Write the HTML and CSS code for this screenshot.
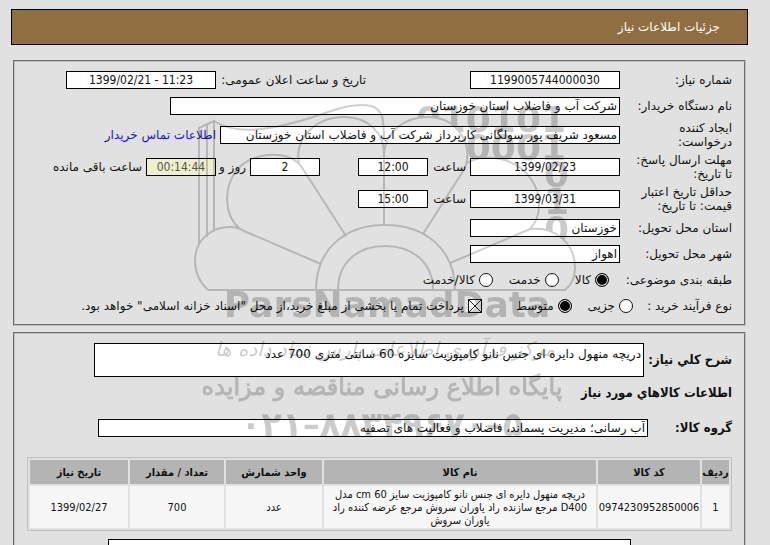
FILE: index.html
```html
<!DOCTYPE html>
<html lang="fa" dir="rtl">
<head>
    <meta charset="UTF-8">
    <meta name="viewport" content="width=device-width, initial-scale=1.0">
    <title>جزئیات اطلاعات نیاز</title>
    <link rel="stylesheet" href="styles.css">
</head>
<body>
    <header class="title-bar">
        <h1>جزئیات اطلاعات نیاز</h1>
    </header>

    <!-- Request details -->
    <section class="panel details">
        <div class="row">
            <label class="caption" for="needNo">شماره نیاز:</label>
            <input class="box center" id="needNo" dir="ltr" value="1199005744000030" readonly>
            <label class="announce" for="announceDate">تاریخ و ساعت اعلان عمومی:</label>
            <input class="box center" id="announceDate" dir="ltr" value="1399/02/21 - 11:23" readonly>
        </div>
        <div class="row">
            <label class="caption" for="buyer">نام دستگاه خریدار:</label>
            <input class="box wide" id="buyer" value="شرکت آب و فاضلاب استان خوزستان" readonly>
        </div>
        <div class="row tall">
            <label class="caption" for="creator">ایجاد کننده درخواست:</label>
            <input class="box creator" id="creator" value="مسعود شریف پور سولگانی کارپرداز شرکت آب و فاضلاب استان خوزستان" readonly>
            <a href="#contact">اطلاعات تماس خریدار</a>
        </div>
        <div class="row tall">
            <label class="caption" for="replyDate">مهلت ارسال پاسخ: تا تاریخ:</label>
            <input class="box center" id="replyDate" dir="ltr" value="1399/02/23" readonly>
            <label class="hour" for="replyTime">ساعت</label>
            <input class="box center small" id="replyTime" dir="ltr" value="12:00" readonly>
            <input class="box center small days" id="daysLeft" dir="ltr" value="2" readonly>
            <label class="day" for="daysLeft">روز و</label>
            <input class="box center small timer" id="timeLeft" dir="ltr" value="00:14:44" readonly>
            <label for="timeLeft">ساعت باقی مانده</label>
        </div>
        <div class="row tall">
            <label class="caption" for="validDate">حداقل تاریخ اعتبار قیمت: تا تاریخ:</label>
            <input class="box center" id="validDate" dir="ltr" value="1399/03/31" readonly>
            <label class="hour" for="validTime">ساعت</label>
            <input class="box center small" id="validTime" dir="ltr" value="15:00" readonly>
        </div>
        <div class="row">
            <label class="caption" for="province">استان محل تحویل:</label>
            <input class="box" id="province" value="خوزستان" readonly>
        </div>
        <div class="row">
            <label class="caption" for="city">شهر محل تحویل:</label>
            <input class="box" id="city" value="اهواز" readonly>
        </div>
        <div class="row">
            <span class="caption subject">طبقه بندی موضوعی:</span>
            <div class="options">
                <label><input type="radio" name="subject" checked>کالا</label>
                <label><input type="radio" name="subject">خدمت</label>
                <label><input type="radio" name="subject">کالا/خدمت</label>
            </div>
        </div>
        <div class="row">
            <span class="caption process">نوع فرآیند خرید :</span>
            <div class="options">
                <label><input type="radio" name="process">جزیی</label>
                <label><input type="radio" name="process" checked>متوسط</label>
                <label class="treasury"><input type="checkbox" checked>پرداخت تمام یا بخشی از مبلغ خرید،از محل "اسناد خزانه اسلامی" خواهد بود.</label>
            </div>
        </div>
    </section>

    <!-- Requested goods -->
    <section class="panel goods">
        <div class="goods-row">
            <label for="summary">شرح کلي نیاز:</label>
            <textarea class="box summary" id="summary" readonly>دریچه منهول دایره ای جنس نانو کامپوزیت سایزه 60 سانتی متری 700 عدد</textarea>
        </div>
        <h2>اطلاعات کالاهاي مورد نیاز</h2>
        <div class="goods-row">
            <label class="group" for="group">گروه کالا:</label>
            <input class="box group-box" id="group" value="آب رسانی؛ مدیریت پسماند، فاضلاب و فعالیت های تصفیه" readonly>
        </div>
        <table>
            <colgroup>
                <col class="col-row">
                <col class="col-code">
                <col>
                <col class="col-unit">
                <col class="col-count">
                <col class="col-date">
            </colgroup>
            <thead>
                <tr>
                    <th>ردیف</th>
                    <th>کد کالا</th>
                    <th>نام کالا</th>
                    <th>واحد شمارش</th>
                    <th>تعداد / مقدار</th>
                    <th>تاریخ نیاز</th>
                </tr>
            </thead>
            <tbody>
                <tr>
                    <td>1</td>
                    <td>0974230952850006</td>
                    <td>دریچه منهول دایره ای جنس نانو کامپوزیت سایز 60 cm مدل D400 مرجع سازنده راد یاوران سروش مرجع عرضه کننده راد یاوران سروش</td>
                    <td>عدد</td>
                    <td>700</td>
                    <td>1399/02/27</td>
                </tr>
            </tbody>
        </table>
        <textarea class="box notes" aria-label="توضیحات" readonly></textarea>
    </section>

    <!-- Watermark -->
    <svg class="watermark" width="400" height="350" viewBox="190 95 400 350" direction="ltr" aria-hidden="true">
        <!-- petals cover the digits behind them -->
        <mask id="petals" maskUnits="userSpaceOnUse" x="190" y="95" width="400" height="350">
            <rect x="190" y="95" width="400" height="350" fill="#fff"/>
            <path d="M384 153C386 132 404 117 428 117C455 117 474 142 465 168L423 234L384 225Z"/>
            <path d="M467 163C488 151 518 160 531 179C541 193 543 215 530 229L450 263Z"/>
            <path d="M565 290Q575 282 575 268C575 244 556 226 530 229L450 263Z"/>
        </mask>
        <g class="lines">
            <path d="M199 245V128L214 121V231M207 237V124"/>
            <path d="M214 121C236 136 272 129 300 121C326 114 350 101 371 106C383 109 384 120 384 140"/>
            <path d="M208 290H565Q575 282 575 268C575 244 556 226 530 229L450 263"/>
            <path d="M208 290Q195 278 195 261C195 240 211 227 230 227Q238 227 244 231L321 264"/>
            <path d="M240 229C224 216 224 190 234 174C247 152 287 148 301 166L346 236"/>
            <path d="M299 164C294 138 316 117 344 117C368 117 384 133 384 153V225"/>
            <path d="M384 153C386 132 404 117 428 117C455 117 474 142 465 168L423 234"/>
            <path d="M467 163C488 151 518 160 531 179C541 193 543 215 530 229"/>
            <path d="M316 290C316 249 345 225 385 225S455 249 455 290"/>
            <path d="M338 290C338 262 358 246 385 246S433 262 433 290"/>
        </g>
        <g class="digits" mask="url(#petals)">
            <text x="566" y="132">010101</text>
            <text x="566" y="160">0001</text>
            <text x="569" y="187">0</text>
            <text x="569" y="214">1</text>
            <text x="569" y="242">0</text>
        </g>
        <text class="brand" x="387" y="317">ParsNamadData</text>
        <text class="script" x="385" y="356">مرکز فرآوری اطلاعات پارس نماد داده ها</text>
        <text class="slogan" x="382" y="395">پایگاه اطلاع رسانی مناقصه و مزایده</text>
        <text class="phone" x="382" y="436">۰۲۱–۸۸۳۴۹۶۷۰–۵</text>
    </svg>
</body>
</html>
```

FILE: styles.css
```css
* {
    margin: 0;
    padding: 0;
    box-sizing: border-box;
}

body {
    position: relative;
    height: 100vh;
    overflow: hidden;
    display: flex;
    flex-direction: column;
    padding: 9px 24px 0 13px;
    background: #e1e1e1;
    color: #111;
    font-family: "DejaVu Sans", Tahoma, sans-serif;
    font-size: 12px;
    line-height: 14px;
}

.title-bar {
    flex: none;
    display: flex;
    align-items: center;
    height: 36px;
    margin: 0 -2px 15px;
    padding: 0 27px;
    background: #906e41;
    border: 1px solid #000;
}

h1 {
    color: #fff;
    font-size: 12px;
    font-weight: normal;
}

.panel {
    flex: none;
    border: 2px groove #c0c0c0;
    padding: 5px 12px;
}

.row {
    display: flex;
    align-items: center;
    gap: 4px;
    height: 26px;
    white-space: nowrap;
}

.row.tall {
    height: 32px;
}

.caption {
    width: 108px;
    padding-left: 6px;
    white-space: normal;
}

.box {
    width: 150px;
    height: 18px;
    padding: 0 2px;
    background: #fff;
    border: 1px solid #000;
    border-radius: 0;
    color: #111;
    font: inherit;
    outline: none;
    resize: none;
}

.center {
    font-family: "DejaVu Sans Condensed", "DejaVu Sans", sans-serif;
    text-align: center;
}

.wide {
    width: 450px;
}

.creator {
    width: 400px;
}

.small {
    width: 70px;
}

.announce {
    width: 146px;
    margin-right: 100px;
}

.hour {
    width: 34px;
}

.days {
    margin-right: 34px;
}

.day {
    width: 26px;
}

.timer {
    background: #f0efcc;
    color: #555;
}

a {
    color: #1a12c4;
    text-decoration: none;
}

.options {
    display: flex;
    gap: 16px;
}

.options label {
    display: flex;
    align-items: center;
    gap: 4px;
}

.subject {
    width: 119px;
}

.process {
    width: 95px;
}

.options .treasury {
    margin-right: 18px;
}

input[type="radio"],
input[type="checkbox"] {
    appearance: none;
    width: 14px;
    height: 14px;
    background: #fff;
    border: 1px solid #111;
}

input[type="radio"] {
    border-radius: 50%;
}

input[type="radio"]:checked {
    background: #000;
    box-shadow: inset 0 0 0 1px #fff;
}

input[type="checkbox"]:checked {
    background:
        linear-gradient(45deg, transparent 47%, #222 47%, #222 53%, transparent 53%),
        linear-gradient(-45deg, transparent 47%, #222 47%, #222 53%, transparent 53%),
        #fff;
}

.goods {
    flex: 1;
    min-height: 0;
    overflow: hidden;
    margin-top: 6px;
    padding-top: 9px;
    padding-bottom: 0;
    border-bottom: 0;
}

.goods-row {
    display: flex;
    align-items: center;
}

.goods-row label,
h2 {
    font-family: "DejaVu Sans Condensed", "DejaVu Sans", sans-serif;
    font-size: 13px;
    font-weight: bold;
}

.goods-row label {
    width: 88px;
}

.goods-row .group {
    width: 84px;
}

.summary {
    width: 550px;
    height: 34px;
    padding-top: 3px;
    overflow: hidden;
}

h2 {
    margin: 9px 0 19px;
}

.group-box {
    width: 550px;
}

table {
    width: 100%;
    margin: 20px 0 8px;
    border: 1px solid #c0c0c0;
    border-collapse: separate;
    border-spacing: 2px;
    table-layout: fixed;
    font-family: "DejaVu Sans Condensed", "DejaVu Sans", sans-serif;
    font-size: 11px;
    line-height: 13px;
    text-align: center;
}

th {
    height: 24px;
    background: #b4b4b4;
}

td {
    height: 42px;
    background: #f7f7f7;
}

.col-row {
    width: 27px;
}

.col-code {
    width: 102px;
}

.col-unit {
    width: 96px;
}

.col-count {
    width: 94px;
}

.col-date {
    width: 98px;
}

.notes {
    display: block;
    width: 523px;
    margin-right: 101px;
}

.watermark {
    position: absolute;
    left: 190px;
    top: 95px;
    opacity: 0.2;
    pointer-events: none;
}

.lines {
    fill: none;
    stroke: #111;
    stroke-width: 2;
}

.digits,
.brand {
    font-size: 36px;
    font-weight: bold;
}

.digits {
    text-anchor: end;
}

.brand,
.script,
.slogan,
.phone {
    text-anchor: middle;
}

.script {
    font-size: 20px;
    font-style: italic;
}

.slogan {
    font-size: 24px;
    stroke: #111;
    stroke-width: 1;
}

.phone {
    font-size: 34px;
    font-weight: bold;
}
```
